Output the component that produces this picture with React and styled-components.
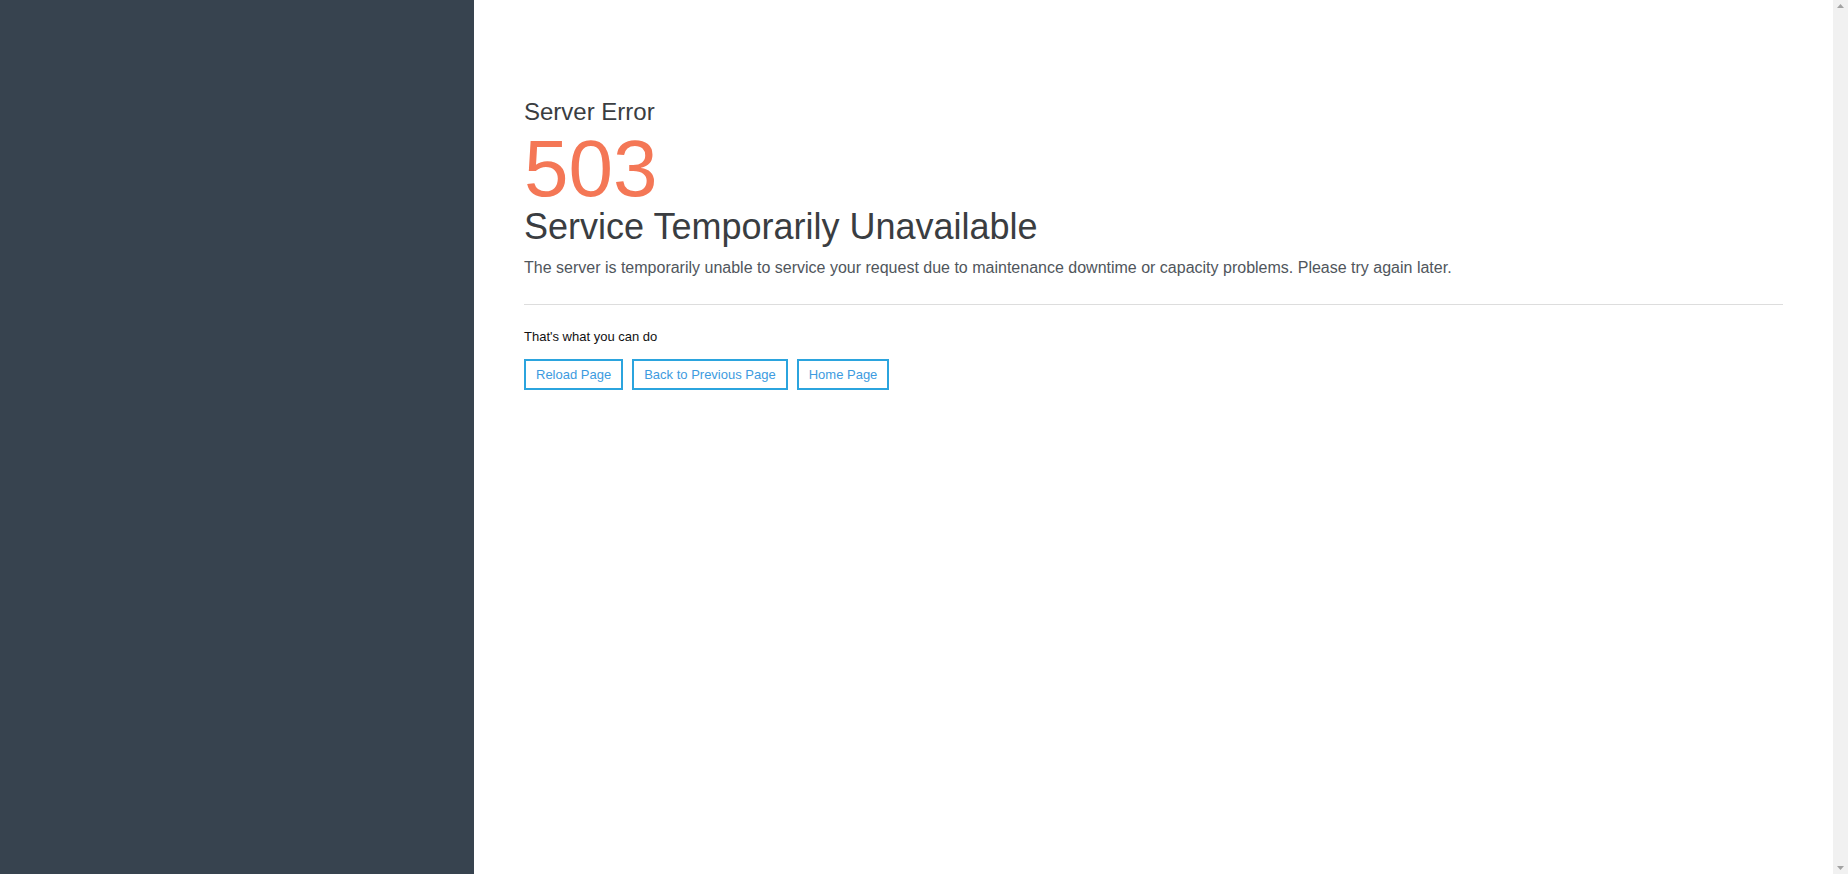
import React from "react";
import styled, { createGlobalStyle } from "styled-components";

const GlobalStyle = createGlobalStyle`
  html, body {
    margin: 0;
    padding: 0;
    height: 100%;
  }
  body {
    font-family: "Liberation Sans", Arial, Helvetica, sans-serif;
    background: #ffffff;
    color: #333333;
  }
  #root {
    height: 100%;
  }
`;

const Page = styled.div`
  display: flex;
  min-height: 100%;
`;

const Sidebar = styled.aside`
  flex: 0 0 474px;
  background: #37434f;
`;

const Main = styled.main`
  flex: 1;
  padding: 99px 50px 40px;
  box-sizing: border-box;
  min-width: 0;
`;

const ScrollGutter = styled.div`
  flex: 0 0 15px;
  background: #f1f1f1;
  display: flex;
  flex-direction: column;
  justify-content: space-between;
  align-items: center;
  padding: 4px 0;
  box-sizing: border-box;
`;

const Arrow = styled.svg`
  display: block;
  width: 7px;
  height: 4px;
  fill: #a3a3a3;
`;

const Kicker = styled.h3`
  margin: 0;
  font-size: 24px;
  line-height: 26px;
  font-weight: 400;
  color: #3a3d41;
`;

const Code = styled.div`
  margin-top: 8px;
  font-size: 80px;
  line-height: 72px;
  font-weight: 400;
  color: #f47756;
`;

const Title = styled.h1`
  margin: 2px 0 0;
  font-size: 36px;
  line-height: 40px;
  font-weight: 400;
  color: #3a3d41;
`;

const Lead = styled.p`
  margin: 10px 0 0;
  font-size: 16px;
  line-height: 22px;
  color: #50565c;
`;

const Divider = styled.hr`
  margin: 25px 0 0;
  border: 0;
  border-top: 1px solid #dddddd;
  height: 0;
`;

const Hint = styled.p`
  margin: 23px 0 0;
  font-size: 13px;
  line-height: 18px;
  color: #111111;
`;

const Actions = styled.div`
  display: flex;
  gap: 9px;
  margin-top: 13px;
`;

const ActionButton = styled.a`
  display: inline-block;
  padding: 4px 10px;
  border: 2px solid #2ba4de;
  background: #ffffff;
  color: #3d9be0;
  font-size: 13px;
  line-height: 19px;
  text-decoration: none;
  cursor: pointer;
  white-space: nowrap;
`;

export default function App() {
  return (
    <>
      <GlobalStyle />
      <Page>
        <Sidebar />
        <Main>
          <Kicker>Server Error</Kicker>
          <Code>503</Code>
          <Title>Service Temporarily Unavailable</Title>
          <Lead>
            The server is temporarily unable to service your request due to maintenance downtime or capacity problems. Please try again later.
          </Lead>
          <Divider />
          <Hint>That's what you can do</Hint>
          <Actions>
            <ActionButton>Reload Page</ActionButton>
            <ActionButton>Back to Previous Page</ActionButton>
            <ActionButton>Home Page</ActionButton>
          </Actions>
        </Main>
        <ScrollGutter>
          <Arrow viewBox="0 0 7 4"><path d="M3.5 0 L7 4 L0 4 Z" /></Arrow>
          <Arrow viewBox="0 0 7 4"><path d="M0 0 L7 0 L3.5 4 Z" /></Arrow>
        </ScrollGutter>
      </Page>
    </>
  );
}
